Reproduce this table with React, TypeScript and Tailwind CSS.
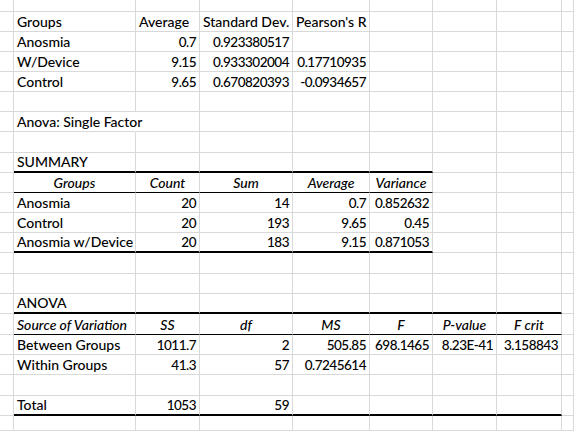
import React from "react";

type Align = "l" | "r" | "c";
type Cell = { t: string; a?: Align; i?: boolean; num?: boolean; noR?: boolean };
type Row = {
  h: string;
  cells: (Cell | null)[];
  border?: { kind: "thick" | "thin"; from: number; to: number };
};

const colW = [
  "w-[14px]",
  "w-[122px]",
  "w-[64px]",
  "w-[93px]",
  "w-[77px]",
  "w-[63px]",
  "w-[64px]",
  "w-[65px]",
];

const L = (t: string, extra: Partial<Cell> = {}): Cell => ({ t, a: "l", ...extra });
const R = (t: string): Cell => ({ t, a: "r", num: true });
const C = (t: string): Cell => ({ t, a: "c", i: true });

const rows: Row[] = [
  { h: "h-[12px]", cells: [] },
  { h: "h-[20px]", cells: [null, L("Groups"), L("Average"), L("Standard Dev."), L("Pearson's R")] },
  { h: "h-[20px]", cells: [null, L("Anosmia"), R("0.7"), R("0.923380517"), null] },
  { h: "h-[20px]", cells: [null, L("W/Device"), R("9.15"), R("0.933302004"), R("0.17710935")] },
  { h: "h-[20px]", cells: [null, L("Control"), R("9.65"), R("0.670820393"), R("-0.0934657")] },
  { h: "h-[20px]", cells: [] },
  { h: "h-[20px]", cells: [null, L("Anova: Single Factor", { noR: true })] },
  { h: "h-[21px]", cells: [] },
  { h: "h-[20px]", cells: [null, L("SUMMARY")], border: { kind: "thick", from: 1, to: 5 } },
  {
    h: "h-[20px]",
    cells: [null, C("Groups"), C("Count"), C("Sum"), C("Average"), C("Variance")],
    border: { kind: "thin", from: 1, to: 5 },
  },
  { h: "h-[20px]", cells: [null, L("Anosmia"), R("20"), R("14"), R("0.7"), R("0.852632")] },
  { h: "h-[20px]", cells: [null, L("Control"), R("20"), R("193"), R("9.65"), R("0.45")] },
  {
    h: "h-[20px]",
    cells: [null, L("Anosmia w/Device"), R("20"), R("183"), R("9.15"), R("0.871053")],
    border: { kind: "thick", from: 1, to: 5 },
  },
  { h: "h-[21px]", cells: [] },
  { h: "h-[20px]", cells: [] },
  { h: "h-[20px]", cells: [null, L("ANOVA")], border: { kind: "thick", from: 1, to: 7 } },
  {
    h: "h-[21px]",
    cells: [null, L("Source of Variation", { i: true }), C("SS"), C("df"), C("MS"), C("F"), C("P-value"), C("F crit")],
    border: { kind: "thin", from: 1, to: 7 },
  },
  {
    h: "h-[20px]",
    cells: [null, L("Between Groups"), R("1011.7"), R("2"), R("505.85"), R("698.1465"), R("8.23E-41"), R("3.158843")],
  },
  { h: "h-[20px]", cells: [null, L("Within Groups"), R("41.3"), R("57"), R("0.7245614")] },
  { h: "h-[21px]", cells: [] },
  { h: "h-[20px]", cells: [null, L("Total"), R("1053"), R("59")], border: { kind: "thick", from: 1, to: 7 } },
  { h: "h-[15px]", cells: [] },
];

function SheetRow({ row }: { row: Row }) {
  const cols = [0, 1, 2, 3, 4, 5, 6, 7, 8];
  return (
    <div className={`flex ${row.h}`}>
      {cols.map((ci) => {
        const cell = row.cells[ci] ?? null;
        const inBorder = row.border && ci >= row.border.from && ci <= row.border.to;
        const bottom = inBorder
          ? row.border!.kind === "thick"
            ? "border-b-2 border-b-black"
            : "border-b border-b-black"
          : "border-b border-b-[#d9d9d9]";
        const right = cell?.noR ? "border-r border-r-transparent" : "border-r border-r-[#d9d9d9]";
        const width = ci < 8 ? colW[ci] : "flex-1";
        const justify =
          cell?.a === "r" ? "justify-end" : cell?.a === "c" ? "justify-center" : "justify-start";
        return (
          <div
            key={ci}
            className={`${width} h-full shrink-0 ${right} ${bottom} flex items-end ${justify} px-[3px] pb-[2px] whitespace-nowrap overflow-visible`}
          >
            {cell ? (
              <span
                className={`leading-none font-medium ${cell.i ? "italic" : ""} ${
                  cell.num ? "text-[13.5px] tracking-[-0.5px]" : "text-[14px]"
                }`}
              >
                {cell.t}
              </span>
            ) : null}
          </div>
        );
      })}
    </div>
  );
}

export default function App() {
  return (
    <div
      className="w-[574px] h-[431px] overflow-hidden bg-white text-black text-[14px]"
      style={{ fontFamily: "Lato, 'Open Sans', sans-serif" }}
    >
      {rows.map((r, i) => (
        <SheetRow key={i} row={r} />
      ))}
    </div>
  );
}
